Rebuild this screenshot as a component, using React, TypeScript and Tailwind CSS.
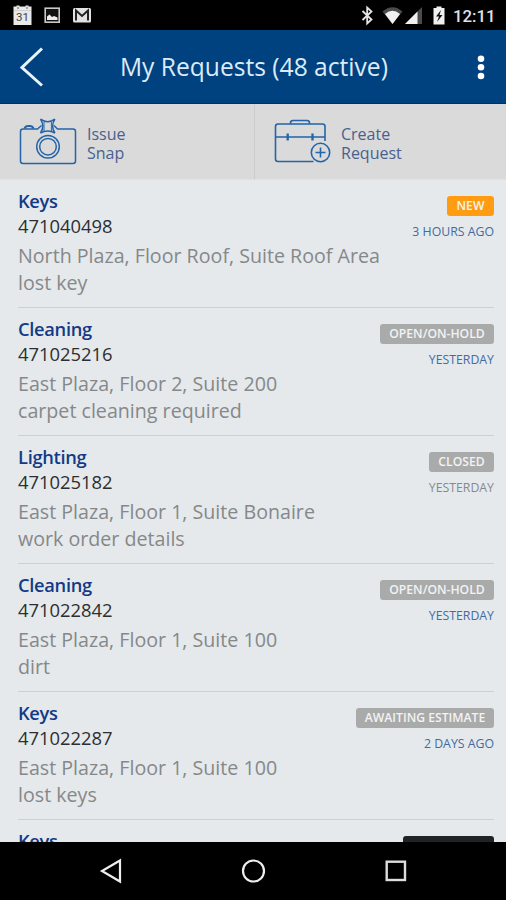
import clsx from 'clsx';

type Request = {
  id: string;
  type: string;
  location?: string;
  details?: string;
  status: string;
  statusStyle: string;
  age: string;
  closed?: boolean;
};

const requests: Request[] = [
  {
    id: '471040498',
    type: 'Keys',
    location: 'North Plaza, Floor Roof, Suite Roof Area',
    details: 'lost key',
    status: 'NEW',
    statusStyle: 'w-[47px] bg-[#ff9c12]',
    age: '3 HOURS AGO',
  },
  {
    id: '471025216',
    type: 'Cleaning',
    location: 'East Plaza, Floor 2, Suite 200',
    details: 'carpet cleaning required',
    status: 'OPEN/ON-HOLD',
    statusStyle: 'w-[114px] bg-[#a9aaaa]',
    age: 'YESTERDAY',
  },
  {
    id: '471025182',
    type: 'Lighting',
    location: 'East Plaza, Floor 1, Suite Bonaire',
    details: 'work order details',
    status: 'CLOSED',
    statusStyle: 'w-[65px] bg-[#a9aaaa]',
    age: 'YESTERDAY',
    closed: true,
  },
  {
    id: '471022842',
    type: 'Cleaning',
    location: 'East Plaza, Floor 1, Suite 100',
    details: 'dirt',
    status: 'OPEN/ON-HOLD',
    statusStyle: 'w-[114px] bg-[#a9aaaa]',
    age: 'YESTERDAY',
  },
  {
    id: '471022287',
    type: 'Keys',
    location: 'East Plaza, Floor 1, Suite 100',
    details: 'lost keys',
    status: 'AWAITING ESTIMATE',
    statusStyle: 'w-[138px] bg-[#a9aaaa]',
    age: '2 DAYS AGO',
  },
  {
    id: '',
    type: 'Keys',
    status: '',
    statusStyle: 'w-[91px] bg-[#202325]',
    age: '',
  },
];

const StatusBar = () => (
  <div className="flex h-[30px] shrink-0 items-center justify-between bg-black pr-[11px] pl-[13px]">
    <svg width="79" height="30" viewBox="0 0 79 30">
      <path d="M0.500 6.500h3v-1h3v1h6v-1h3v1h3V25H0.500z" fill="#e9e9e9" />
      <path d="M4 8h2M13 8h2" stroke="#888" strokeWidth="1.500" />
      <path d="M1 10.500h17" stroke="#cfcfcf" />
      <text
        x="9.500"
        y="21"
        textAnchor="middle"
        fill="#444"
        className="font-[Roboto,sans-serif] text-[11.500px]"
      >
        31
      </text>
      <rect x="32.200" y="8.200" width="14" height="14" fill="#111" stroke="#c9c9c9" strokeWidth="1.600" />
      <path d="M34 20v-3.500l2.500-2 2.500 2.500 2-1 3.500 1.500V20z" fill="#eee" />
      <rect x="60" y="8" width="18" height="14.500" rx="1.500" fill="#e2e2e2" />
      <path d="M63 20.500V10.500l6 5.500 6-5.500v10" fill="none" stroke="#222" strokeWidth="2" />
    </svg>
    <div className="flex items-center">
      <svg width="92" height="30" viewBox="361 0 92 30">
        <path
          d="M362.500 11l9 8.500-4.300 4V7.500l4.300 4-9 8.500"
          fill="none"
          stroke="#e4e4e4"
          strokeWidth="1.800"
        />
        <path d="M382.500 11.500Q392.500 3 402.500 11.500L392.500 24z" fill="#4b4b4b" />
        <path d="M385 14Q392.500 7.500 400 14L392.500 24z" fill="#f1f1f1" />
        <path d="M422 7v17h-17z" fill="#4b4b4b" />
        <path d="M417.500 11.500V24H405z" fill="#f1f1f1" />
        <path d="M436.500 6.500h5V8h3v16.500h-11V8h3z" fill="#f1f1f1" />
        <path d="M441 10l-5 6.500h3l-2 5.500 5.500-7h-3z" fill="#111" />
      </svg>
      <span className="w-[42px] pt-[2px] text-right font-[Roboto,sans-serif] text-[16.800px] leading-none font-medium whitespace-nowrap text-[#e2e2e2]">
        12:11
      </span>
    </div>
  </div>
);

const Header = () => (
  <header className="flex h-[74px] shrink-0 items-center border-b border-[#00306a] bg-[#00417f] px-5">
    <svg width="24" height="40" viewBox="0 0 24 40" fill="none">
      <path d="M22 1.500L2 20.500l20 18" stroke="#e8f3fb" strokeWidth="3" />
    </svg>
    <h1 className="flex-1 pt-px pl-[76px] text-[24.600px] leading-none whitespace-nowrap text-[#dcebf7]">
      My Requests (48 active)
    </h1>
    <svg width="10" height="40" viewBox="0 0 10 40" fill="#fff">
      <circle cx="5" cy="11.700" r="3.300" />
      <circle cx="5" cy="20.300" r="3.300" />
      <circle cx="5" cy="29" r="3.300" />
    </svg>
  </header>
);

const CameraIcon = () => (
  <svg width="58" height="50" viewBox="19 116 58 50" fill="none" stroke="#2464a8" strokeWidth="1.500">
    <path d="M54 125.500l3.500 3.500H73q2.500 0 2.500 2.500V161q0 2.500-2.500 2.500H23q-2.500 0-2.500-2.500v-29.500q0-2.500 2.500-2.500h14.500l4-3.500" />
    <path d="M24.500 128.500q1-2.500 3.500-2.500h2q2.500 0 3.500 2.500" strokeWidth="2" />
    <path d="M40.500 119.200q7.200 5.200 14.400 0q-4.600 7 0 13.800q-7.200-4-14.400 0q4.600-6.800 0-13.800z" />
    <path d="M44 122v9M51.400 122v9" strokeWidth="1" />
    <circle cx="48" cy="146.700" r="11.300" />
    <circle cx="48" cy="146.700" r="8.300" />
  </svg>
);

const BriefcaseIcon = () => (
  <svg width="58" height="50" viewBox="274 116 58 50" fill="none" stroke="#2464a8" strokeWidth="1.600">
    <path d="M313.500 161.500H278q-2.500 0-2.500-2.500v-32.500q0-2.500 2.500-2.500h44.500q2.500 0 2.500 2.500V141" />
    <path d="M290.500 124v-1q0-2.500 2.500-2.500h14q2.500 0 2.500 2.500v1M275.500 137H325" />
    <path d="M287.700 133.500v7M312.500 133.500v7" strokeWidth="2.300" />
    <circle cx="320.500" cy="152.500" r="9.200" />
    <path d="M320.500 147.500v10M315.500 152.500h10" />
  </svg>
);

const Actions = () => (
  <div className="grid h-[76px] shrink-0 grid-cols-[255px_1fr] border-b border-[#dfe1e2] bg-[#dadada] text-[16px] leading-[18.500px] text-[#48618f]">
    <button className="flex gap-[10px] border-r border-[#cbcbcb] pt-[12px] pl-[19px] text-left">
      <CameraIcon />
      <span className="pt-[9px]">
        Issue
        <br />
        Snap
      </span>
    </button>
    <button className="flex gap-[9px] pt-[12px] pl-[19px] text-left">
      <BriefcaseIcon />
      <span className="pt-[9px]">
        Create
        <br />
        Request
      </span>
    </button>
  </div>
);

const RequestRow = ({request}: {request: Request}) => (
  <li className="flex h-[128px] shrink-0 justify-between border-b border-[#cdd1d3] pt-[8px] whitespace-nowrap">
    <div className="w-0">
      <h2 className="text-[18.300px] leading-[25px] font-semibold tracking-[-0.300px] text-[#123a85]">
        {request.type}
      </h2>
      <p className="text-[18.400px] leading-[25px] text-[#2c2f31]">{request.id}</p>
      <div className="pt-[5px] text-[19.650px] leading-[26.500px] text-[#858889]">
        <p>{request.location}</p>
        <p>{request.details}</p>
      </div>
    </div>
    <div className="flex flex-col items-end pt-[8px]">
      <span
        className={clsx(
          'flex h-5 items-center justify-center rounded-[3px] pt-px text-[12.200px] leading-none font-semibold text-[#f3f3f3]',
          request.statusStyle
        )}
      >
        {request.status}
      </span>
      <span
        className={clsx(
          'pt-[7px] text-[12.300px] leading-[18px]',
          request.closed ? 'text-[#85898c]' : 'text-[#426b9f]'
        )}
      >
        {request.age}
      </span>
    </div>
  </li>
);

const NavigationBar = () => (
  <nav className="flex h-[58px] shrink-0 items-center justify-between bg-black pr-[97px] pl-[99px]">
    <svg width="26" height="26" viewBox="0 0 26 26" fill="none" stroke="#eee" strokeWidth="2.200">
      <path d="M21 2.500v21L3 13z" />
    </svg>
    <svg width="26" height="26" viewBox="0 0 26 26" fill="none" stroke="#eee" strokeWidth="2.200">
      <circle cx="12.500" cy="13" r="10.500" />
    </svg>
    <svg width="26" height="26" viewBox="0 0 26 26" fill="none" stroke="#ddd" strokeWidth="2.400">
      <rect x="3.700" y="3.700" width="18.300" height="18.300" />
    </svg>
  </nav>
);

const App = () => (
  <div className="flex h-[900px] w-[506px] flex-col overflow-hidden bg-[#e5e9ec] font-['Open_Sans',sans-serif]">
    <StatusBar />
    <Header />
    <Actions />
    <ul className="flex min-h-0 flex-1 flex-col overflow-hidden pr-[12px] pl-[18px]">
      {requests.map((request, index) => (
        <RequestRow key={index} request={request} />
      ))}
    </ul>
    <NavigationBar />
  </div>
);

export default App;
